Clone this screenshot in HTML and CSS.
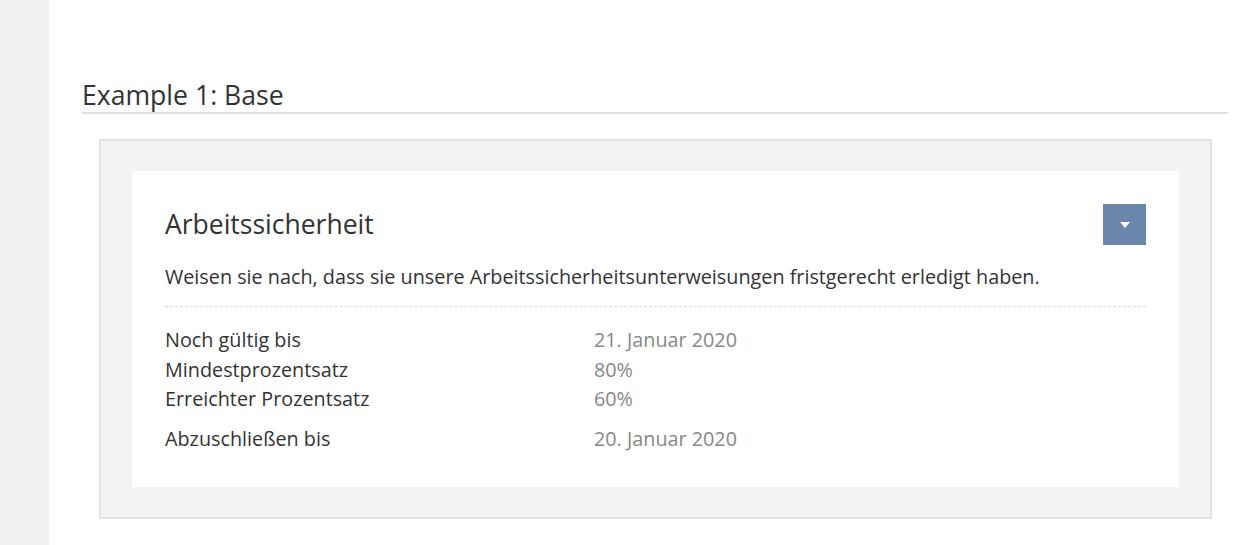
FILE: index.html
```html
<!DOCTYPE html>
<html lang="de">
<head>
<meta charset="utf-8">
<title>Example 1: Base</title>
<link rel="stylesheet" href="styles.css">
</head>
<body>
<div class="layout">
  <aside class="sidebar"></aside>
  <main class="main">
    <h2 class="section-title">Example 1: Base</h2>
    <div class="example">
      <div class="card">
        <div class="card-head">
          <h3 class="card-title">Arbeitssicherheit</h3>
          <button class="toggle" type="button" aria-label="Aufklappen">
            <svg width="10" height="6" viewBox="0 0 10 6"><path d="M0 0h10L5 6z" fill="#fff"/></svg>
          </button>
        </div>
        <p class="card-desc">Weisen sie nach, dass sie unsere Arbeitssicherheitsunterweisungen fristgerecht erledigt haben.</p>
        <div class="details">
          <div class="row"><span class="label">Noch gültig bis</span><span class="value">21. Januar 2020</span></div>
          <div class="row"><span class="label">Mindestprozentsatz</span><span class="value">80%</span></div>
          <div class="row"><span class="label">Erreichter Prozentsatz</span><span class="value">60%</span></div>
          <div class="row row-gap"><span class="label">Abzuschließen bis</span><span class="value">20. Januar 2020</span></div>
        </div>
      </div>
    </div>
  </main>
</div>
</body>
</html>
```

FILE: styles.css
```css
* { box-sizing: border-box; }
html, body { margin: 0; padding: 0; }
body {
  font-family: "Open Sans", "Noto Sans", sans-serif;
  color: #333;
  background: #fff;
}
.layout {
  display: flex;
  min-height: 545px;
}
.sidebar {
  width: 49px;
  flex: none;
  background: #f1f1f1;
}
.main {
  flex: 1;
  padding: 78px 19px 0 33px;
}
.section-title {
  margin: 0;
  font-weight: 400;
  font-size: 26.6px;
  line-height: 34px;
  color: #333;
  border-bottom: 2px solid #e0e0e0;
}
.example {
  margin: 25px 16px 0 17px;
  background: #f3f3f3;
  border: 2px solid #e3e3e3;
  padding: 30px 31px 30px 31px;
}
.card {
  background: #fff;
  padding: 33px 33px 34px 33px;
}
.card-head {
  display: flex;
  justify-content: space-between;
  align-items: flex-start;
}
.card-title {
  margin: 0;
  font-weight: 400;
  font-size: 26.5px;
  line-height: 40px;
  color: #333;
}
.toggle {
  width: 43px;
  height: 41px;
  border: none;
  background: #6b86ab;
  display: flex;
  align-items: center;
  justify-content: center;
  padding: 0;
  cursor: pointer;
}
.card-desc {
  margin: 18px 0 0;
  font-size: 19.8px;
  line-height: 27px;
  padding-bottom: 16px;
  border-bottom: 1px dashed #ddd;
}
.details {
  padding-top: 18px;
}
.row {
  display: flex;
  font-size: 19.8px;
  line-height: 29.5px;
}
.row-gap { margin-top: 10px; }
.label {
  width: 429px;
  flex: none;
  color: #333;
}
.value { color: #888; }
```
